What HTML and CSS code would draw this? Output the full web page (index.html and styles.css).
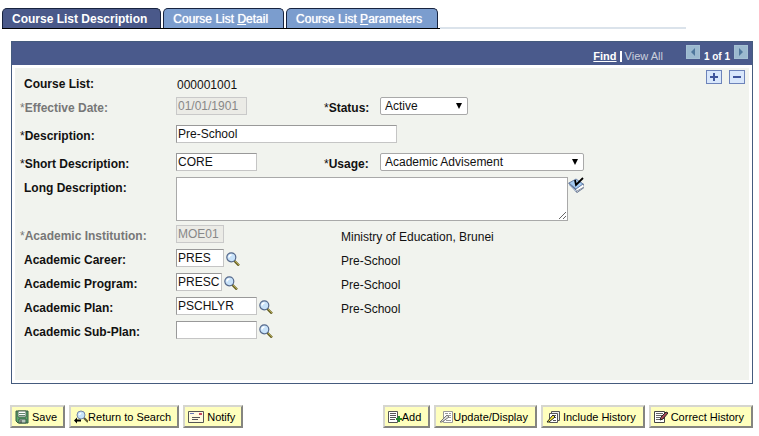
FILE: index.html
```html
<!DOCTYPE html>
<html lang="en">
<head>
  <meta charset="UTF-8">
  <title>Course List Description</title>
  <link rel="stylesheet" href="styles.css">
</head>
<body>

  <!-- Shared icons -->
  <svg class="sprite" aria-hidden="true">
    <symbol id="lookup" viewBox="0 0 14 14">
      <path d="M8 8.500l5 5" stroke="#665f20" stroke-width="2.400"/>
      <path d="M8 8l5 5" stroke="#b0a550" stroke-width="1"/>
      <circle cx="5.300" cy="5.300" r="4.500" fill="#c9e3fa" stroke="#56698c" stroke-width="1.200"/>
      <path d="M3 5.500a2.500 2.500 0 0 1 2.500-2.500" stroke="#fff" stroke-width="1.500" fill="none"/>
    </symbol>
  </svg>

  <nav class="tabs">
    <div class="tab-list">
      <a href="#" class="tab active">Course List Description</a>
      <a href="#" class="tab">Course List <u>D</u>etail</a>
      <a href="#" class="tab">Course List <u>P</u>arameters</a>
    </div>
    <span class="tab-line"></span>
  </nav>

  <form id="course-form">
    <section class="panel">
      <div class="panel-header">
        <div class="links"><a href="#" class="find">Find</a> <span class="bar"></span> <span class="view-all">View All</span></div>
        <button type="button" class="arrow" aria-label="Previous" disabled><svg viewBox="0 0 12 12"><path d="M8 2v8L4 6z" fill="#4f779c"/></svg></button>
        <span class="count">1 of 1</span>
        <button type="button" class="arrow" aria-label="Next" disabled><svg viewBox="0 0 12 12"><path d="M4 2v8l4-4z" fill="#4f779c"/></svg></button>
      </div>

      <div class="panel-body">
        <div class="row first">
          <span class="label">Course List:</span>
          <span class="text">000001001</span>
          <div class="row-actions">
            <button type="button" class="row-button" aria-label="Add row"><svg viewBox="0 0 14 12"><path d="M3 6h8M7 2v8" stroke="#3f559c" stroke-width="2"/></svg></button>
            <button type="button" class="row-button" aria-label="Delete row"><svg viewBox="0 0 14 12"><path d="M3 6h8" stroke="#3f559c" stroke-width="2"/></svg></button>
          </div>
        </div>
        <div class="row tall">
          <label class="label muted" for="date"><i>*</i>Effective Date:</label>
          <div class="field"><input type="text" id="date" class="w-date" value="01/01/1901" disabled></div>
          <label class="label short" for="status"><i>*</i>Status:</label>
          <div class="select status"><select id="status"><option>Active</option><option>Inactive</option></select></div>
        </div>
        <div class="row tall">
          <label class="label" for="description"><i>*</i>Description:</label>
          <input type="text" id="description" class="w-long" value="Pre-School">
        </div>
        <div class="row">
          <label class="label" for="short-description"><i>*</i>Short Description:</label>
          <div class="field"><input type="text" id="short-description" class="w-medium" value="CORE"></div>
          <label class="label short" for="usage"><i>*</i>Usage:</label>
          <div class="select usage"><select id="usage"><option>Academic Advisement</option></select></div>
        </div>
        <div class="row area">
          <label class="label" for="long-description">Long Description:</label>
          <textarea id="long-description"></textarea>
          <button type="button" class="icon-button" aria-label="Spell check">
            <svg width="17" height="16" viewBox="0 0 17 16">
              <path d="M0 6l7 8 2 2 7-5V7L8 3z" fill="#5c6d8c"/>
              <path d="M8 12l7-5 1 3-7 5z" fill="#fff"/>
              <path d="M9 14l7-4" stroke="#8b91a0"/>
              <path d="M1 6l7-4 7 5-7 5z" fill="#a3caf2" stroke="#6d84aa"/>
              <path d="M1 8l7 6" stroke="#b9cbe4"/>
              <path d="M7 3l1 5 7-7" fill="none" stroke="#000" stroke-width="1.800"/>
            </svg>
          </button>
        </div>
        <div class="row">
          <label class="label muted" for="institution"><i>*</i>Academic Institution:</label>
          <div class="field wide"><input type="text" id="institution" class="w-small" value="MOE01" disabled></div>
          <span class="text">Ministry of Education, Brunei</span>
        </div>
        <div class="row">
          <label class="label" for="career">Academic Career:</label>
          <div class="field wide"><input type="text" id="career" class="w-small" value="PRES"><button type="button" class="icon-button lookup" aria-label="Look up career"><svg><use href="#lookup"/></svg></button></div>
          <span class="text">Pre-School</span>
        </div>
        <div class="row">
          <label class="label" for="program">Academic Program:</label>
          <div class="field wide"><input type="text" id="program" class="w-program" value="PRESC"><button type="button" class="icon-button lookup" aria-label="Look up program"><svg><use href="#lookup"/></svg></button></div>
          <span class="text">Pre-School</span>
        </div>
        <div class="row">
          <label class="label" for="plan">Academic Plan:</label>
          <div class="field wide"><input type="text" id="plan" class="w-medium" value="PSCHLYR"><button type="button" class="icon-button lookup" aria-label="Look up plan"><svg><use href="#lookup"/></svg></button></div>
          <span class="text">Pre-School</span>
        </div>
        <div class="row">
          <label class="label" for="sub-plan">Academic Sub-Plan:</label>
          <div class="field wide"><input type="text" id="sub-plan" class="w-medium"><button type="button" class="icon-button lookup" aria-label="Look up sub-plan"><svg><use href="#lookup"/></svg></button></div>
        </div>
      </div>
    </section>

    <div class="toolbar">
      <div class="group">
        <button type="button" class="tool spaced">
          <svg viewBox="0 0 14 14"><path d="M1 1h12v12H3l-2-2z" fill="#58a568" stroke="#355944"/><path d="M3 1h8v6H3z" fill="#fff" stroke="#47644f"/><path d="M4 3.500h6M4 5.500h6" stroke="#658970"/><path d="M4 9h7v4H4z" fill="#b7c6bc" stroke="#355944"/><path d="M6 10v3" stroke="#333"/></svg>Save
        </button>
        <button type="button" class="tool">
          <svg viewBox="0 0 14 14"><path d="M9 7l5 5" stroke="#5e5b32" stroke-width="2"/><circle cx="7" cy="5" r="4" fill="#c6e4fa" stroke="#7888a8"/><path d="M5 5l2-2" stroke="#fff" stroke-width="1.500"/><path d="M0 10.500l3-3v2h4v2H3v2z" fill="#000"/></svg>Return to Search
        </button>
        <button type="button" class="tool spaced">
          <svg class="mail" viewBox="0 0 16 14"><path d="M.5 1.500h15v11H.5z" fill="#fffbdf" stroke="#555"/><path d="M2 3.500h4" stroke="#6577b5"/><path d="M11 3h3v2h-3z" fill="#c94a61"/><path d="M4 7.500h8M4 9.500h6" stroke="#555"/></svg>Notify
        </button>
      </div>
      <div class="group modes">
        <button type="button" class="tool">
          <svg viewBox="0 0 14 14"><path d="M.5 1.500h9v11h-9z" fill="#fff" stroke="#555"/><path d="M2 3.500h6M2 5.500h6M2 7.500h6M2 9.500h5" stroke="#555"/><path d="M8 9h6M11 6v6" stroke="#23892d" stroke-width="2"/></svg>Add
        </button>
        <button type="button" class="tool">
          <svg viewBox="0 0 14 14"><path d="M4.500 1.500h9v11h-9z" fill="#fff" stroke="#999"/><path d="M6 3.500h3M10 3.500h2M7 5.500h5M8 7.500h4M7 10.500h5" stroke="#999"/><path d="M1 12l7-7 2 2-7 5z" fill="#ddd" stroke="#777"/></svg>Update/Display
        </button>
        <button type="button" class="tool spaced">
          <svg viewBox="0 0 14 14"><path d="M5.500 1.500h8v9h-8z" fill="#eee" stroke="#555"/><path d="M3.500 3.500h8v9h-8z" fill="#fff" stroke="#555"/><path d="M8 5.500h2M8 7.500h2M7 10.500h3" stroke="#555"/><path d="M1 12l6-7 2 2-6 5z" fill="#fff13b" stroke="#222"/></svg>Include History
        </button>
        <button type="button" class="tool spaced">
          <svg viewBox="0 0 14 14"><path d="M.5 1.500h10v11H.5z" fill="#fff" stroke="#444"/><path d="M2 3.500h7M2 5.500h6M2 7.500h4M2 9.500h6" stroke="#666"/><path d="M6 10l1-3 5-5 2 1-5 6z" fill="#a64856" stroke="#222"/></svg>Correct History
        </button>
      </div>
    </div>
  </form>

</body>
</html>
```
FILE: styles.css
```css
body {
  margin: 0;
  padding: 8px 6px 8px 2px;
  background: #fff;
  color: #111;
  font-family: "Liberation Sans", Arial, sans-serif;
  font-size: 12px;
}
* {
  box-sizing: border-box;
}
button {
  font-family: inherit;
  color: #000;
  cursor: pointer;
}
.sprite {
  display: none;
}

/* Tabs */
.tabs {
  display: flex;
  align-items: flex-end;
  margin-right: 67px;
}
.tab-list {
  display: flex;
  gap: 2px;
  padding-right: 2px;
  border-bottom: 1px solid #000;
}
.tab {
  height: 20px;
  padding: 0 15px 0 9px;
  border: 1px solid #17233f;
  border-bottom: 0;
  border-radius: 5px 5px 0 0;
  background: #7b9dce;
  color: #fff;
  line-height: 20px;
  text-decoration: none;
  text-shadow: 0 0 1px #fff;
  white-space: nowrap;
}
.tab.active {
  padding-right: 13px;
  background: #4a598a;
  font-weight: bold;
  text-shadow: none;
}
.tab-line {
  flex: 1;
  height: 2px;
  background: #dbe3eb;
}

/* Panel */
.panel {
  margin: 12px 0 0 9px;
  border: 1px solid #455b7e;
}
.panel-header {
  display: flex;
  align-items: flex-start;
  justify-content: flex-end;
  gap: 4px;
  height: 23px;
  padding: 3px 4px 0 0;
  background: #4a5a8c;
  color: #fff;
}
.links {
  display: flex;
  align-items: center;
  gap: 3px;
  margin-right: 19px;
  padding-top: 5px;
  font-size: 11px;
}
.find {
  color: #fff;
  font-weight: bold;
}
.bar {
  width: 2px;
  height: 11px;
  background: #fff;
}
.view-all {
  color: #cbd0dc;
}
.count {
  padding-top: 6px;
  font-size: 10px;
  font-weight: bold;
}
.arrow {
  width: 14px;
  height: 14px;
  padding: 0;
  border: 1px solid #a4c0d3;
  background: #9bb9cf;
}
.arrow svg {
  display: block;
  width: 12px;
  height: 12px;
}
.panel-body {
  margin: 3px;
  padding: 2px 4px 35px 5px;
  background: #f1f3ee;
}

/* Form rows */
.row {
  display: flex;
  align-items: flex-start;
  min-height: 24px;
}
.row.tall {
  min-height: 28px;
}
.row.area {
  min-height: 48px;
}
.label {
  flex: none;
  width: 156px;
  padding-left: 4px;
  font-weight: bold;
  line-height: 22px;
}
.label i {
  margin-left: -4px;
  font-style: normal;
  font-weight: normal;
}
.label.short {
  width: 56px;
}
.muted {
  color: #777;
}
.text {
  padding-left: 1px;
  line-height: 24px;
}
.row.first {
  min-height: 27px;
  align-items: stretch;
}
.first .label,
.first .text {
  padding-top: 3px;
}
.field {
  display: flex;
  align-items: flex-start;
  flex: none;
  width: 148px;
}
.field.wide {
  width: 164px;
}
input, select, textarea {
  margin: 0;
  border: 1px solid #c5c5c5;
  border-top-color: #999;
  border-left-color: #999;
  border-radius: 0;
  background: #fff;
  color: #111;
  font-family: inherit;
  font-size: 12px;
}
input {
  height: 18px;
  padding: 0 1px;
}
input:disabled {
  border-color: #c9c9c9;
  background: #ebebe6;
  color: #888;
}
.w-small {
  width: 48px;
}
.w-program {
  width: 46px;
}
.w-date {
  width: 71px;
}
.w-medium {
  width: 81px;
}
.w-long {
  width: 221px;
}
textarea {
  width: 392px;
  height: 44px;
  border-color: #a9a9a9;
}
.select {
  position: relative;
}
.select select {
  width: 100%;
  height: 18px;
  padding: 0 4px;
  border-color: #a9a9a9;
  border-radius: 2px;
  appearance: none;
}
.select::after {
  content: "";
  position: absolute;
  top: 6px;
  right: 6px;
  border: 3px solid transparent;
  border-top: 6px solid #000;
  border-bottom: 0;
  pointer-events: none;
}
.status {
  width: 88px;
}
.usage {
  width: 204px;
}
.icon-button {
  padding: 0;
  border: 0;
  background: none;
}
.icon-button svg {
  display: block;
}
.lookup {
  margin: 3px 0 0 2px;
}
.lookup svg {
  width: 14px;
  height: 14px;
}
.row-actions {
  display: flex;
  align-items: flex-start;
  gap: 7px;
  margin-left: auto;
}
.row-button {
  width: 16px;
  height: 14px;
  padding: 0;
  border: 1px solid #6d83ba;
  background: #d9e7fb;
}
.row-button svg {
  display: block;
  width: 14px;
  height: 12px;
}

/* Bottom buttons */
.toolbar {
  display: flex;
  justify-content: space-between;
  margin: 21px 0 0 8px;
}
.group {
  display: flex;
  gap: 4px;
}
.tool {
  display: flex;
  align-items: center;
  height: 23px;
  padding: 0 6px 0 3px;
  border: 2px solid #d6d6cf;
  border-right-color: #858580;
  border-bottom-color: #858580;
  background: #ffffbd;
  font-size: 11px;
  white-space: nowrap;
}
.modes .tool {
  padding-right: 7px;
}
.tool svg {
  width: 14px;
  height: 14px;
}
.tool .mail {
  width: 16px;
}
.spaced {
  gap: 3px;
}
```
